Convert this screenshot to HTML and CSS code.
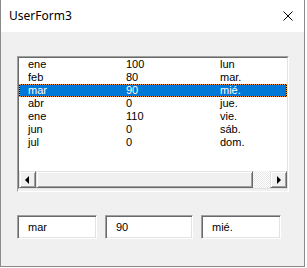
FILE: index.html
```html
<!DOCTYPE html>
<html lang="es">
  <head>
    <meta charset="UTF-8" />
    <title>UserForm3</title>
    <link rel="stylesheet" href="styles.css">
  </head>
  <body>
    <div class="window">
      <div class="titlebar">
        <span class="title">UserForm3</span>
        <svg class="close" width="10" height="10" viewBox="0 0 10 10">
          <path d="M0.5 0.5 L9.5 9.5 M9.5 0.5 L0.5 9.5" stroke="#000" stroke-width="1" fill="none" />
        </svg>
      </div>
      <div class="client">
        <div class="listbox">
          <div class="listbox-inner">
            <div class="rows">
              <div class="row"><span>ene</span><span>100</span><span>lun</span></div>
              <div class="row"><span>feb</span><span>80</span><span>mar.</span></div>
              <div class="row selected"><span>mar</span><span>90</span><span>mié.</span></div>
              <div class="row"><span>abr</span><span>0</span><span>jue.</span></div>
              <div class="row"><span>ene</span><span>110</span><span>vie.</span></div>
              <div class="row"><span>jun</span><span>0</span><span>sáb.</span></div>
              <div class="row"><span>jul</span><span>0</span><span>dom.</span></div>
            </div>
            <div class="hscroll">
              <div class="sbtn"><span class="arrow left"></span></div>
              <div class="thumb"></div>
              <div class="track"></div>
              <div class="sbtn"><span class="arrow right"></span></div>
            </div>
          </div>
        </div>
        <div class="fields">
          <div class="textbox small">mar</div>
          <div class="textbox wide">90</div>
          <div class="textbox small">mié.</div>
        </div>
      </div>
    </div>
  </body>
</html>
```

FILE: styles.css
```css
body {
  margin: 0;
  background: #fff;
  font-family: "Liberation Sans", Arial, sans-serif;
  font-size: 11px;
  color: #000;
}
.window {
  width: 303px;
  height: 266px;
  border: 1px solid #8a8a8a;
  border-top: 0;
  background: #f0f0f0;
  display: flex;
  flex-direction: column;
}
.titlebar {
  height: 32px;
  background: #fff;
  display: flex;
  align-items: center;
  justify-content: space-between;
  padding: 0 11px 0 8px;
  flex-shrink: 0;
}
.title {
  font-family: "Noto Sans", sans-serif;
  font-size: 12px;
  margin-top: -1px;
}
.close {
  display: block;
}
.client {
  padding: 24px 0 0 16px;
}
.listbox {
  width: 270px;
  height: 134px;
  border: 1px solid;
  border-color: #a0a0a0 #fff #fff #a0a0a0;
}
.listbox-inner {
  height: 132px;
  border: 1px solid;
  border-color: #696969 #e3e3e3 #e3e3e3 #696969;
  background: #fff;
  display: flex;
  flex-direction: column;
  box-sizing: border-box;
  width: 270px;
}
.rows {
  flex: 1;
}
.row {
  display: flex;
  height: 13px;
  line-height: 13px;
  padding-left: 9px;
  position: relative;
}
.row span:nth-child(1) {
  width: 98px;
}
.row span:nth-child(2) {
  width: 94px;
}
.row.selected {
  background: #0078d7;
  color: #fff;
  outline: 1px solid #000;
  outline-offset: -1px;
}
.row.selected::after {
  content: "";
  position: absolute;
  inset: 0;
  border: 1px dotted #ff9a1e;
}
.hscroll {
  height: 17px;
  display: flex;
}
.sbtn,
.thumb {
  box-sizing: border-box;
  border: 1px solid;
  border-color: #e3e3e3 #696969 #696969 #e3e3e3;
  box-shadow: inset 1px 1px 0 #fff, inset -1px -1px 0 #a0a0a0;
  background: #f0f0f0;
}
.sbtn {
  width: 17px;
  display: flex;
  align-items: center;
  justify-content: center;
}
.thumb {
  width: 217px;
}
.track {
  flex: 1;
  background: repeating-conic-gradient(#fff 0 25%, #e8e8e8 0 50%) 0 0 / 2px 2px;
}
.arrow {
  width: 0;
  height: 0;
  border-top: 4px solid transparent;
  border-bottom: 4px solid transparent;
}
.arrow.left {
  border-right: 4px solid #000;
  margin-left: -1px;
}
.arrow.right {
  border-left: 4px solid #000;
  margin-left: 1px;
}
.fields {
  display: flex;
  gap: 8px;
  margin-top: 23px;
}
.textbox {
  height: 22px;
  line-height: 22px;
  padding-left: 10px;
  border: 1px solid;
  border-color: #a0a0a0 #fff #fff #a0a0a0;
  box-shadow: inset 1px 1px 0 #696969, inset -1px -1px 0 #e3e3e3;
  background: #fff;
}
.textbox.small {
  width: 68px;
}
.textbox.wide {
  width: 76px;
}
```
